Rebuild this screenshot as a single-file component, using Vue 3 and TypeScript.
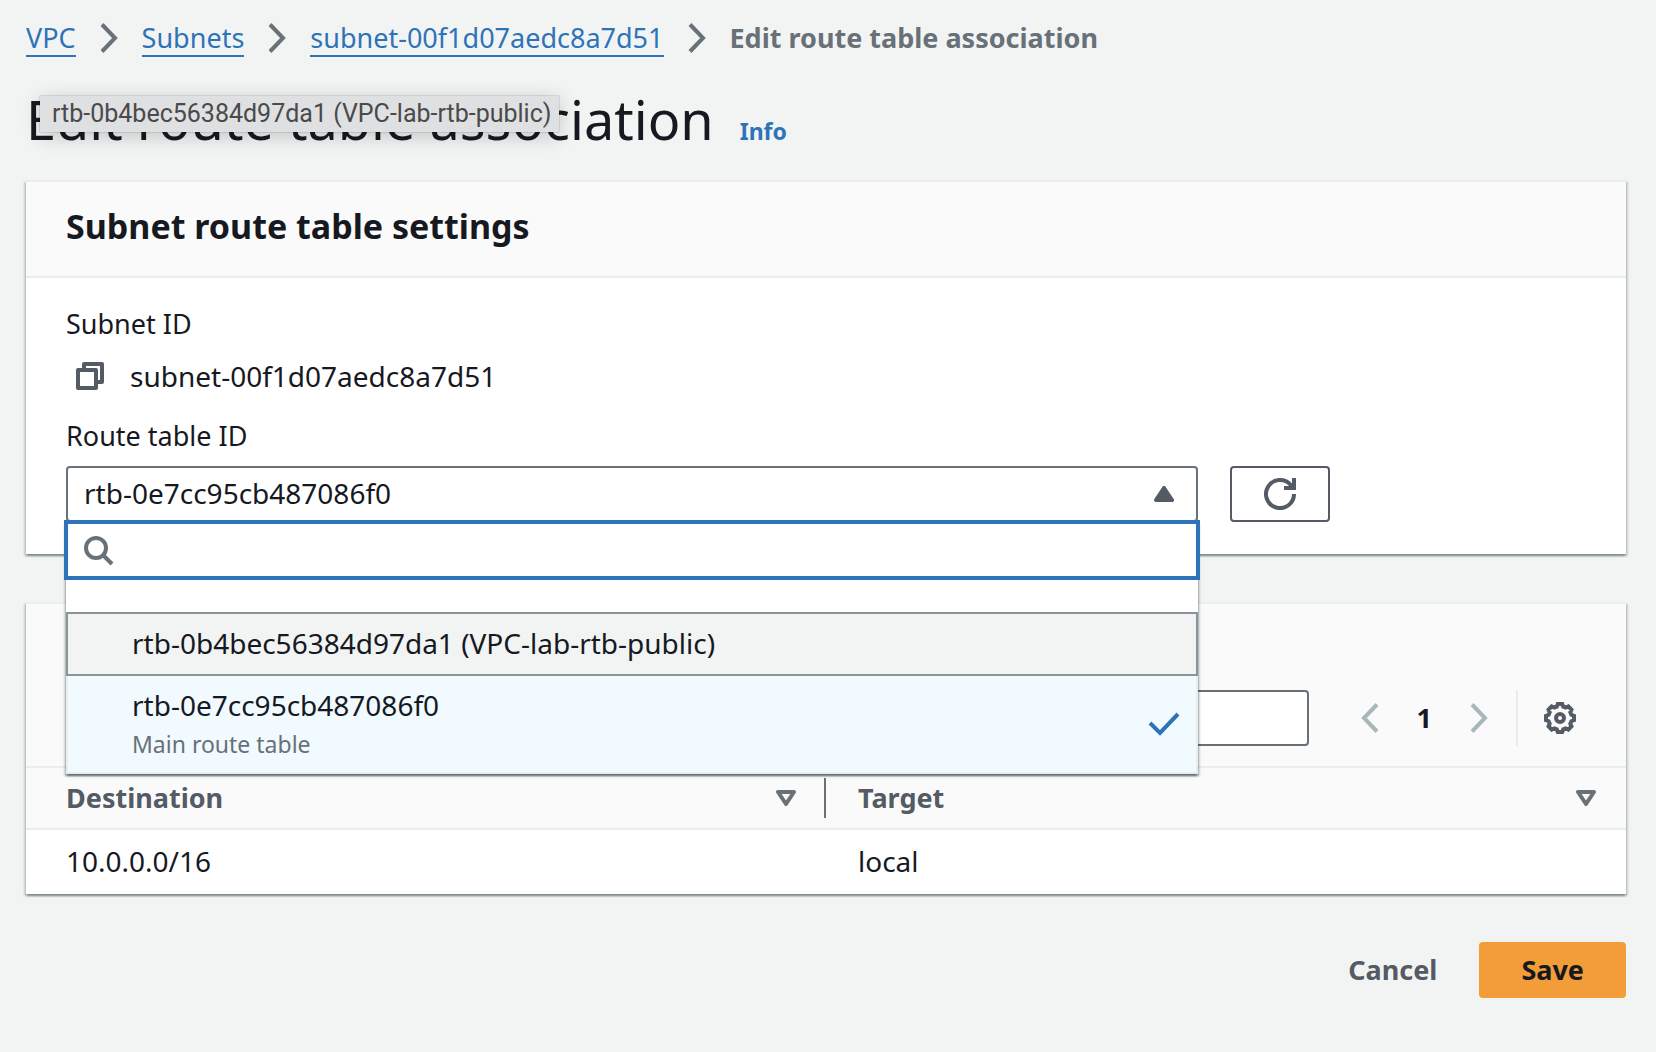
<script setup lang="ts">
import { ref } from 'vue'

interface Crumb { text: string; href: string }
interface RouteTable { id: string; label: string; description?: string }
interface Route { destination: string; target: string }

const crumbs: Crumb[] = [
  { text: 'VPC', href: '#vpc' },
  { text: 'Subnets', href: '#subnets' },
  { text: 'subnet-00f1d07aedc8a7d51', href: '#subnet' },
]

const routeTables: RouteTable[] = [
  { id: 'rtb-0b4bec56384d97da1', label: 'rtb-0b4bec56384d97da1 (VPC-lab-rtb-public)' },
  { id: 'rtb-0e7cc95cb487086f0', label: 'rtb-0e7cc95cb487086f0', description: 'Main route table' },
]

const routes: Route[] = [{ destination: '10.0.0.0/16', target: 'local' }]
const columns = ['Destination', 'Target']

const selected = ref('rtb-0e7cc95cb487086f0')
const highlighted = ref('rtb-0b4bec56384d97da1')
const query = ref('')
const filter = ref('')

// Outline of an eight-toothed cog centred in a 32 unit box.
function cog(): string {
  const points: string[] = []
  for (let i = 0; i < 8; i++) {
    const base = i * 45
    const corners: [number, number][] = [[-16, 11.8], [-9, 14.2], [9, 14.2], [16, 11.8]]
    for (const [offset, r] of corners) {
      const a = ((base + offset) * Math.PI) / 180
      points.push(`${(16 + r * Math.sin(a)).toFixed(2)} ${(16 - r * Math.cos(a)).toFixed(2)}`)
    }
  }
  return `M${points.join('L')}Z`
}
const cogPath = cog()
</script>

<template>
  <main class="page">
    <nav class="crumbs" aria-label="Breadcrumbs">
      <template v-for="c in crumbs" :key="c.text">
        <a class="crumb" :href="c.href">{{ c.text }}</a>
        <svg class="crumb-sep" viewBox="0 0 18 30" aria-hidden="true"><path d="M2 1.5 15 15 2 28.5" /></svg>
      </template>
      <span class="crumb-current" aria-current="page">Edit route table association</span>
    </nav>

    <header class="title-row">
      <h1>Edit route table association</h1>
      <a class="info" href="#info">Info</a>
      <div class="tooltip" role="tooltip">rtb-0b4bec56384d97da1 (VPC-lab-rtb-public)</div>
    </header>

    <section class="card settings">
      <h2>Subnet route table settings</h2>
      <div class="settings-body">
        <div class="label">Subnet ID</div>
        <div class="subnet">
          <button class="bare copy" type="button" aria-label="Copy subnet ID">
            <svg viewBox="0 0 28 28" aria-hidden="true">
              <path d="M8 6V2h18v18h-4M2 8h18v18H2z" stroke-linejoin="round" />
            </svg>
          </button>
          <span>subnet-00f1d07aedc8a7d51</span>
        </div>
        <label class="label" for="route-table">Route table ID</label>
        <div class="select-row">
          <div class="select-wrap">
            <select id="route-table" v-model="selected">
              <option v-for="r in routeTables" :key="r.id" :value="r.id">{{ r.label }}</option>
            </select>
            <svg class="caret" viewBox="0 0 20 16" aria-hidden="true">
              <path d="M10 2 18 14H2z" />
            </svg>
            <div class="dropdown">
              <div class="search">
                <svg viewBox="0 0 30 30" aria-hidden="true">
                  <circle cx="12" cy="12" r="10" /><path d="m19 19 9 9" />
                </svg>
                <input v-model="query" type="text" aria-label="Search route tables" />
              </div>
              <ul role="listbox" aria-label="Route tables">
                <li
                  v-for="r in routeTables"
                  :key="r.id"
                  class="option"
                  :class="{ highlighted: r.id === highlighted, selected: r.id === selected }"
                  role="option"
                  :aria-selected="r.id === selected"
                  @click="selected = r.id"
                  @mouseenter="highlighted = r.id"
                >
                  <div class="option-text">
                    <span class="option-label">{{ r.label }}</span>
                    <span v-if="r.description" class="option-desc">{{ r.description }}</span>
                  </div>
                  <svg v-if="r.id === selected" class="check" viewBox="0 0 32 24" aria-hidden="true">
                    <path d="m2 11 10 10L30 2" />
                  </svg>
                </li>
              </ul>
            </div>
          </div>
          <button class="refresh" type="button" aria-label="Refresh route tables">
            <svg viewBox="0 0 32 32" aria-hidden="true">
              <path d="M30 16A14 14 0 1 1 26.500 6.800L29 10M30 0v10H20" />
            </svg>
          </button>
        </div>
      </div>
    </section>

    <section class="card routes">
      <div class="toolbar">
        <input v-model="filter" class="filter" type="text" aria-label="Filter routes" />
        <div class="pager">
          <button class="bare" type="button" aria-label="Previous page">
            <svg class="arrow" viewBox="0 0 18 30" aria-hidden="true"><path d="M16 1.500 3 15 16 28.500" /></svg>
          </button>
          <span class="page-number">1</span>
          <button class="bare" type="button" aria-label="Next page">
            <svg class="arrow" viewBox="0 0 18 30" aria-hidden="true"><path d="M2 1.500 15 15 2 28.500" /></svg>
          </button>
        </div>
        <div class="prefs">
          <button class="bare" type="button" aria-label="Preferences">
            <svg class="cog" viewBox="0 0 32 32" aria-hidden="true">
              <path :d="cogPath" /><circle cx="16" cy="16" r="4" />
            </svg>
          </button>
        </div>
      </div>
      <table>
        <thead>
          <tr>
            <th v-for="c in columns" :key="c" scope="col">
              <div class="th-inner">
                <span>{{ c }}</span>
                <svg viewBox="0 0 20 16" aria-hidden="true"><path d="M2 2h16l-8 12z" /></svg>
              </div>
            </th>
          </tr>
        </thead>
        <tbody>
          <tr v-for="r in routes" :key="r.destination">
            <td>{{ r.destination }}</td>
            <td>{{ r.target }}</td>
          </tr>
        </tbody>
      </table>
    </section>

    <footer class="actions">
      <button class="cancel" type="button">Cancel</button>
      <button class="save" type="button">Save</button>
    </footer>
  </main>
</template>

<style>
body {
  background: #f2f4f3;
}
</style>

<style scoped>
.page {
  box-sizing: border-box;
  min-height: 100vh;
  padding: 18px 30px 54px 26px;
  background: #f2f4f3;
  color: #16191f;
  font-family: "Noto Sans", "Open Sans", sans-serif;
  font-size: 28px;
  line-height: 40px;
}
.page * {
  box-sizing: border-box;
}
svg {
  display: block;
  flex: none;
  fill: none;
  stroke: currentColor;
  stroke-width: 4;
}
button,
input,
select {
  font: inherit;
  color: inherit;
}
button {
  cursor: pointer;
}
.bare {
  display: block;
  padding: 0;
  border: 0;
  background: none;
}

.crumbs {
  display: flex;
  align-items: center;
  height: 40px;
  font-size: 27px;
}
.crumb {
  height: 38px;
  line-height: 38px;
  color: #2e73b8;
  text-decoration: none;
  border-bottom: 2px solid #2e73b8;
}
.crumb-sep {
  width: 18px;
  height: 30px;
  margin: 0 24px;
  color: #687078;
}
.crumb-current {
  color: #687078;
  font-weight: 700;
}

.title-row {
  position: relative;
  display: flex;
  align-items: baseline;
  gap: 26px;
  padding: 25px 0;
}
h1 {
  margin: 0;
  font-size: 54px;
  font-weight: 400;
  line-height: 72px;
}
.info {
  color: #2e73b8;
  font-size: 23px;
  font-weight: 700;
  text-decoration: none;
}
.tooltip {
  position: absolute;
  left: 14px;
  top: 38px;
  height: 36px;
  padding: 0 8px 0 12px;
  background: #dfe0e2;
  color: #4a4a4a;
  font-family: Roboto, Inter, sans-serif;
  font-size: 25px;
  line-height: 36px;
  white-space: nowrap;
  box-shadow: 0 0 1px rgba(0, 0, 0, 0.5), 0 4px 20px rgba(0, 0, 0, 0.2);
}

.card {
  background: #fff;
  border-top: 2px solid #eaeded;
  box-shadow: 0 2px 2px rgba(0, 28, 36, 0.3), 2px 2px 2px rgba(0, 28, 36, 0.15),
    -2px 2px 2px rgba(0, 28, 36, 0.15);
}
h2 {
  margin: 0;
  padding: 20px 40px 26px;
  background: #fafafa;
  border-bottom: 2px solid #eaeded;
  font-size: 34px;
  font-weight: 700;
  line-height: 48px;
}
.settings-body {
  padding: 26px 40px 32px;
}
.label {
  display: block;
  font-size: 27px;
}
.subnet {
  display: flex;
  align-items: center;
  gap: 26px;
  margin: 12px 0 20px;
  padding-left: 10px;
}
.copy {
  color: #545b64;
}
.copy svg {
  width: 28px;
  height: 28px;
}
.select-row {
  display: flex;
  gap: 32px;
  margin-top: 10px;
}
.select-wrap {
  position: relative;
  flex: 0 0 calc(75% - 8px);
}
select {
  display: block;
  width: 100%;
  height: 56px;
  padding: 0 60px 2px 16px;
  appearance: none;
  border: 2px solid #687078;
  border-radius: 4px;
  background: #fff;
}
.caret {
  position: absolute;
  right: 24px;
  top: 20px;
  width: 20px;
  height: 16px;
  color: #545b64;
  pointer-events: none;
}
.caret path {
  fill: currentColor;
  stroke-linejoin: round;
}
.dropdown {
  position: absolute;
  z-index: 2;
  left: 0;
  right: 0;
  top: 56px;
  background: #fff;
  border-bottom: 2px solid #eaeded;
  box-shadow: 0 2px 2px rgba(0, 28, 36, 0.5), 2px 2px 2px rgba(0, 28, 36, 0.15),
    -2px 2px 2px rgba(0, 28, 36, 0.15);
}
.search {
  display: flex;
  align-items: center;
  height: 60px;
  margin: -2px -2px 32px;
  padding: 2px 16px 0;
  gap: 16px;
  background: #fff;
  border: 4px solid #2e73b8;
  color: #687078;
}
.search svg {
  width: 30px;
  height: 30px;
}
.search input {
  flex: 1;
  min-width: 0;
  height: 40px;
  padding: 0;
  border: 0;
  outline: 0;
  background: none;
}
ul {
  margin: 0;
  padding: 0;
  list-style: none;
}
.option {
  display: flex;
  align-items: center;
  justify-content: space-between;
  padding: 9px 16px 11px 64px;
  border: 2px solid transparent;
}
.option.selected {
  padding-bottom: 9px;
  border-width: 0 2px;
  border-color: #eaeded;
  background: #f1faff;
}
.option.highlighted {
  border: 2px solid #879596;
  background: #f2f3f3;
}
.option-text {
  display: flex;
  flex-direction: column;
}
.option-desc {
  color: #687078;
  font-size: 23px;
  line-height: 38px;
}
.check {
  width: 32px;
  height: 24px;
  color: #2e73b8;
}
.refresh {
  display: flex;
  align-items: center;
  justify-content: center;
  width: 100px;
  height: 56px;
  padding: 0;
  border: 2px solid #545b64;
  border-radius: 4px;
  background: #fff;
  color: #545b64;
}
.refresh svg {
  width: 32px;
  height: 32px;
}

.routes {
  margin-top: 48px;
}
.toolbar {
  display: flex;
  padding: 86px 40px 20px;
  background: #fafafa;
}
.filter {
  flex: 1;
  min-width: 0;
  height: 56px;
  padding: 0 16px;
  border: 2px solid #687078;
  border-radius: 4px;
  background: #fff;
}
.pager {
  display: flex;
  align-items: center;
  gap: 38px;
  padding: 0 28px 0 52px;
  color: #aab7b8;
}
.arrow {
  width: 18px;
  height: 30px;
}
.page-number {
  color: #16191f;
  font-size: 27px;
  font-weight: 700;
}
.prefs {
  display: flex;
  align-items: center;
  padding: 0 10px 0 26px;
  border-left: 2px solid #eaeded;
  color: #545b64;
}
.cog {
  width: 32px;
  height: 32px;
}
table {
  width: 100%;
  table-layout: fixed;
  border-spacing: 0;
}
th {
  padding: 10px 0;
  background: #fafafa;
  border-top: 2px solid #eaeded;
  border-bottom: 2px solid #eaeded;
  color: #545b64;
  font-size: 27px;
  font-weight: 700;
  text-align: left;
}
.th-inner {
  display: flex;
  align-items: center;
  justify-content: space-between;
  height: 40px;
  padding: 0 30px 0 32px;
}
th:first-child .th-inner {
  padding: 0 28px 0 40px;
  border-right: 2px solid #687078;
}
.th-inner svg {
  width: 20px;
  height: 16px;
  color: #687078;
  stroke-linejoin: round;
}
td {
  padding: 11px 32px 13px;
}
td:first-child {
  padding-left: 40px;
}

.actions {
  display: flex;
  justify-content: flex-end;
  margin-top: 48px;
}
.actions button {
  height: 56px;
  padding: 0 42px;
  border: 0;
  border-radius: 4px;
  background: none;
  color: #545b64;
  font-size: 27px;
  font-weight: 700;
}
.actions .save {
  background: #f29d38;
  color: #16191f;
}
</style>
